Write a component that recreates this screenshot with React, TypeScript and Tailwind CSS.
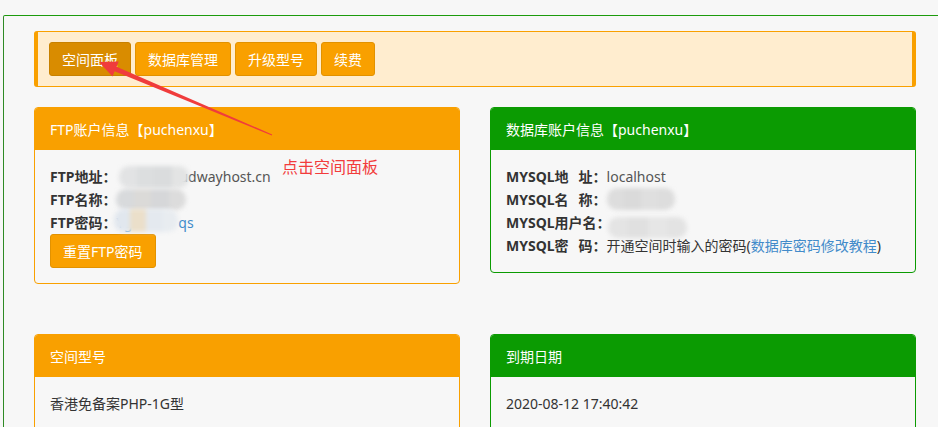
import React from "react";

const FONT = '"Noto Sans", "Noto Sans CJK SC", sans-serif';

function Blur({ x, y, w, h, colors }: { x: number; y: number; w: number; h: number; colors: string[] }) {
  return (
    <div
      className="absolute flex overflow-hidden rounded-[10px] blur-[2px]"
      style={{ left: x, top: y, width: w, height: h }}
    >
      {colors.map((c, i) => (
        <div key={i} className="flex-1 h-full" style={{ background: c }} />
      ))}
    </div>
  );
}

function Card({
  title,
  color,
  children,
}: {
  title: string;
  color: "orange" | "green";
  children: React.ReactNode;
}) {
  const orange = color === "orange";
  return (
    <div
      className={
        "w-[426px] rounded-[4px] border overflow-hidden " +
        (orange ? "border-[#f9a000]" : "border-[#0b9b02]")
      }
    >
      <div
        className={
          "h-[42px] flex items-center pl-[15px] text-[14px] text-white " +
          (orange ? "bg-[#f9a000]" : "bg-[#0b9b02]")
        }
      >
        {title}
      </div>
      <div className="px-[15px] py-[15px] text-[14px] leading-[23px] text-[#555]">{children}</div>
    </div>
  );
}

function Label({ children }: { children: React.ReactNode }) {
  return <span className="font-bold text-[#333]">{children}</span>;
}

function Sp() {
  return <span className="inline-block w-[10px]" />;
}

export default function App() {
  return (
    <div className="relative w-[938px] h-[427px] overflow-hidden bg-[#f7f7f7]" style={{ fontFamily: FONT }}>
      <div className="ml-[3px] mt-[15px] w-[944px] h-[440px] border-t border-l border-t-[#1c9b0c] border-l-[#2f8a25] rounded-tl-[2px] pl-[30px] pt-[15px]">
        <div className="w-[882px]">
          {/* toolbar */}
          <div className="flex gap-[4px] rounded-[3px] border border-[#f9a000] border-l-4 border-r-4 bg-[#ffedcf] py-[10px] pl-[11px]">
            <button className="h-[34px] px-[12px] rounded-[3px] border border-[#c88100] bg-[#d98c00] text-[14px] text-white">
              空间面板
            </button>
            <button className="h-[34px] px-[12px] rounded-[3px] border border-[#e29200] bg-[#f9a000] text-[14px] text-white">
              数据库管理
            </button>
            <button className="h-[34px] px-[12px] rounded-[3px] border border-[#e29200] bg-[#f9a000] text-[14px] text-white">
              升级型号
            </button>
            <button className="h-[34px] px-[12px] rounded-[3px] border border-[#e29200] bg-[#f9a000] text-[14px] text-white">
              续费
            </button>
          </div>

          {/* row 1 */}
          <div className="mt-[20px] flex items-start gap-[30px]">
            <Card title="FTP账户信息【puchenxu】" color="orange">
              <div>
                <Label>FTP地址：</Label>
                <span className="inline-block w-[63px]" />
                <span>udwayhost.cn</span>
              </div>
              <div>
                <Label>FTP名称：</Label>
              </div>
              <div>
                <Label>FTP密码：</Label>
                <span className="text-[#428bca]">Yg</span>
                <span className="inline-block w-[46px]" />
                <span className="text-[#428bca]">qs</span>
              </div>
              <button className="mt-0 h-[34px] px-[12px] rounded-[3px] border border-[#e29200] bg-[#f9a000] text-[14px] text-white">
                重置FTP密码
              </button>
            </Card>
            <Card title="数据库账户信息【puchenxu】" color="green">
              <div>
                <Label>
                  MYSQL地<Sp />址：
                </Label>
                <span>localhost</span>
              </div>
              <div>
                <Label>
                  MYSQL名<Sp />称：
                </Label>
              </div>
              <div>
                <Label>MYSQL用户名：</Label>
              </div>
              <div>
                <Label>
                  MYSQL密<Sp />码：
                </Label>
                <span className="text-[#333]">开通空间时输入的密码(</span>
                <span className="text-[#428bca]">数据库密码修改教程</span>
                <span className="text-[#333]">)</span>
              </div>
            </Card>
          </div>

          {/* row 2 */}
          <div className="mt-[50px] flex items-start gap-[30px]">
            <Card title="空间型号" color="orange">
              <div className="text-[#333]">香港免备案PHP-1G型</div>
              <div className="h-[40px]" />
            </Card>
            <Card title="到期日期" color="green">
              <div className="text-[#333]">2020-08-12 17:40:42</div>
              <div className="h-[40px]" />
            </Card>
          </div>
        </div>
      </div>

      {/* privacy blurs */}
      <Blur x={119} y={166} w={70} h={22} colors={["#e2e3e4", "#dcdedf", "#dadcdd", "#e3e4e4"]} />
      <Blur x={116} y={189} w={70} h={21} colors={["#d8dadc", "#dbdad8", "#d6d7d9", "#dcdcdc"]} />
      <Blur x={114} y={209} w={64} h={23} colors={["#e1e7ee", "#ebdfca", "#e4e9ef", "#e8ecf0"]} />
      <Blur x={607} y={188} w={68} h={22} colors={["#dddddd", "#dadada", "#dfdfdf", "#dddddd"]} />
      <Blur x={608} y={217} w={79} h={21} colors={["#e4e4e4", "#e0e0e0", "#e6e6e6", "#e3e3e3"]} />

      {/* annotation arrow */}
      <svg className="absolute left-0 top-0 pointer-events-none" width="938" height="427" viewBox="0 0 938 427">
        <polygon
          points="272.2,134.5 271.8,135.5 114.6,71.3 112.5,76.4 99,62 118.7,61.6 116.6,66.7"
          fill="#f03c3c"
        />
      </svg>
      <div className="absolute left-[282px] top-[156px] text-[16px] leading-[22px] text-[#f23c3c]">点击空间面板</div>
    </div>
  );
}
